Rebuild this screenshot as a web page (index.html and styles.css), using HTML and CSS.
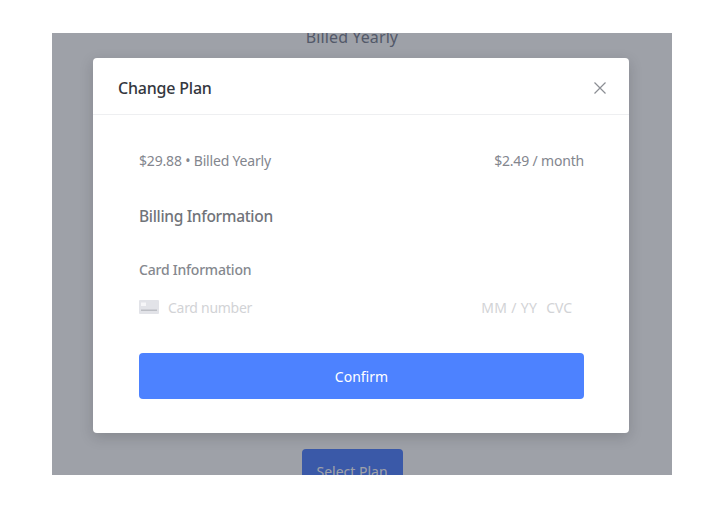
FILE: index.html
```html
<!DOCTYPE html>
<html lang="en">
<head>
<meta charset="utf-8">
<title>Change Plan</title>
<link rel="stylesheet" href="styles.css">
</head>
<body>
<div class="stage">
  <div class="page">
    <div class="page-billed">Billed Yearly</div>
    <button class="page-select">Select Plan</button>
  </div>
  <div class="overlay">
    <div class="modal">
      <header class="modal-head">
        <h2 class="modal-title">Change Plan</h2>
        <svg class="close" viewBox="0 0 14 14" width="14" height="14" aria-hidden="true"><path d="M1.5 1.5l11 11M12.5 1.500l-11 11"/></svg>
      </header>
      <div class="modal-body">
        <div class="price-row">
          <span>$29.88 • Billed Yearly</span>
          <span>$2.49 / month</span>
        </div>
        <h3 class="billing">Billing Information</h3>
        <div class="card-label">Card Information</div>
        <div class="card-field">
          <svg class="card-icon" viewBox="0 0 20 14" width="20" height="14" aria-hidden="true">
            <rect width="20" height="14" rx="1" fill="#e2e3e8"/>
            <rect x="2" y="2.500" width="5" height="3.500" fill="#f6f6f8"/>
            <rect x="2" y="9.500" width="16" height="1.500" fill="#bcbec4"/>
          </svg>
          <span class="card-number">Card number</span>
          <span class="card-exp">MM / YY</span>
          <span class="card-cvc">CVC</span>
        </div>
        <button class="confirm">Confirm</button>
      </div>
    </div>
  </div>
</div>
</body>
</html>
```
FILE: styles.css
```css
* { box-sizing: border-box; }
html, body { margin: 0; background: #fff; }
body { padding: 33px 46px 36px 52px; font-family: "Noto Sans", "Open Sans", sans-serif; }
.stage { position: relative; width: 620px; height: 442px; overflow: hidden; background: #fff; }
.page { display: flex; flex-direction: column; align-items: center; width: 600px; height: 100%; justify-content: space-between; }
.page-billed { font-size: 16px; line-height: 22px; margin-top: -7px; color: #7b8190; letter-spacing: 0.1px; }
.page-select { width: 101px; height: 44px; margin-bottom: -18px; border: 0; border-radius: 4px; background: #4f80ff; color: #fff; font: 14px "Noto Sans", sans-serif; }
.overlay { position: absolute; inset: 0; padding: 25px 0 0 41px; background: rgba(31, 36, 54, 0.43); }
.modal { width: 536px; height: 375px; background: #fff; border-radius: 4px; box-shadow: 0 4px 14px rgba(20, 20, 30, 0.18); }
.modal-head { display: flex; align-items: center; justify-content: space-between; height: 57px; padding: 4px 22px 0 25px; border-bottom: 1px solid #eeeff1; }
.modal-title { margin: 0; font-size: 16px; font-weight: 500; color: #34373e; letter-spacing: -0.2px; }
.close { fill: none; stroke: #8b8e94; stroke-width: 1.2; }
.modal-body { padding: 36px 45px 0 46px; }
.price-row { display: flex; justify-content: space-between; font-size: 14px; line-height: 20px; color: #83868e; letter-spacing: -0.18px; }
.billing { margin: 34px 0 0; font-size: 15.5px; line-height: 22px; font-weight: 500; color: #707379; letter-spacing: -0.32px; }
.card-label { margin-top: 33px; font-size: 14px; line-height: 20px; font-weight: 500; color: #85888e; letter-spacing: -0.22px; }
.card-field { display: flex; align-items: center; margin-top: 17px; height: 20px; font-size: 14px; color: #d2d3d6; letter-spacing: -0.28px; }
.card-icon { flex: none; margin-right: 9px; }
.card-number { flex: 1; }
.card-exp { margin-right: 9px; letter-spacing: 0.35px; }
.card-cvc { margin-right: 12px; letter-spacing: -0.1px; }
.confirm { display: block; width: 100%; height: 46px; margin-top: 36px; border: 0; border-radius: 4px; background: #4d82ff; color: #fff; font: 14px "Noto Sans", sans-serif; }
```
